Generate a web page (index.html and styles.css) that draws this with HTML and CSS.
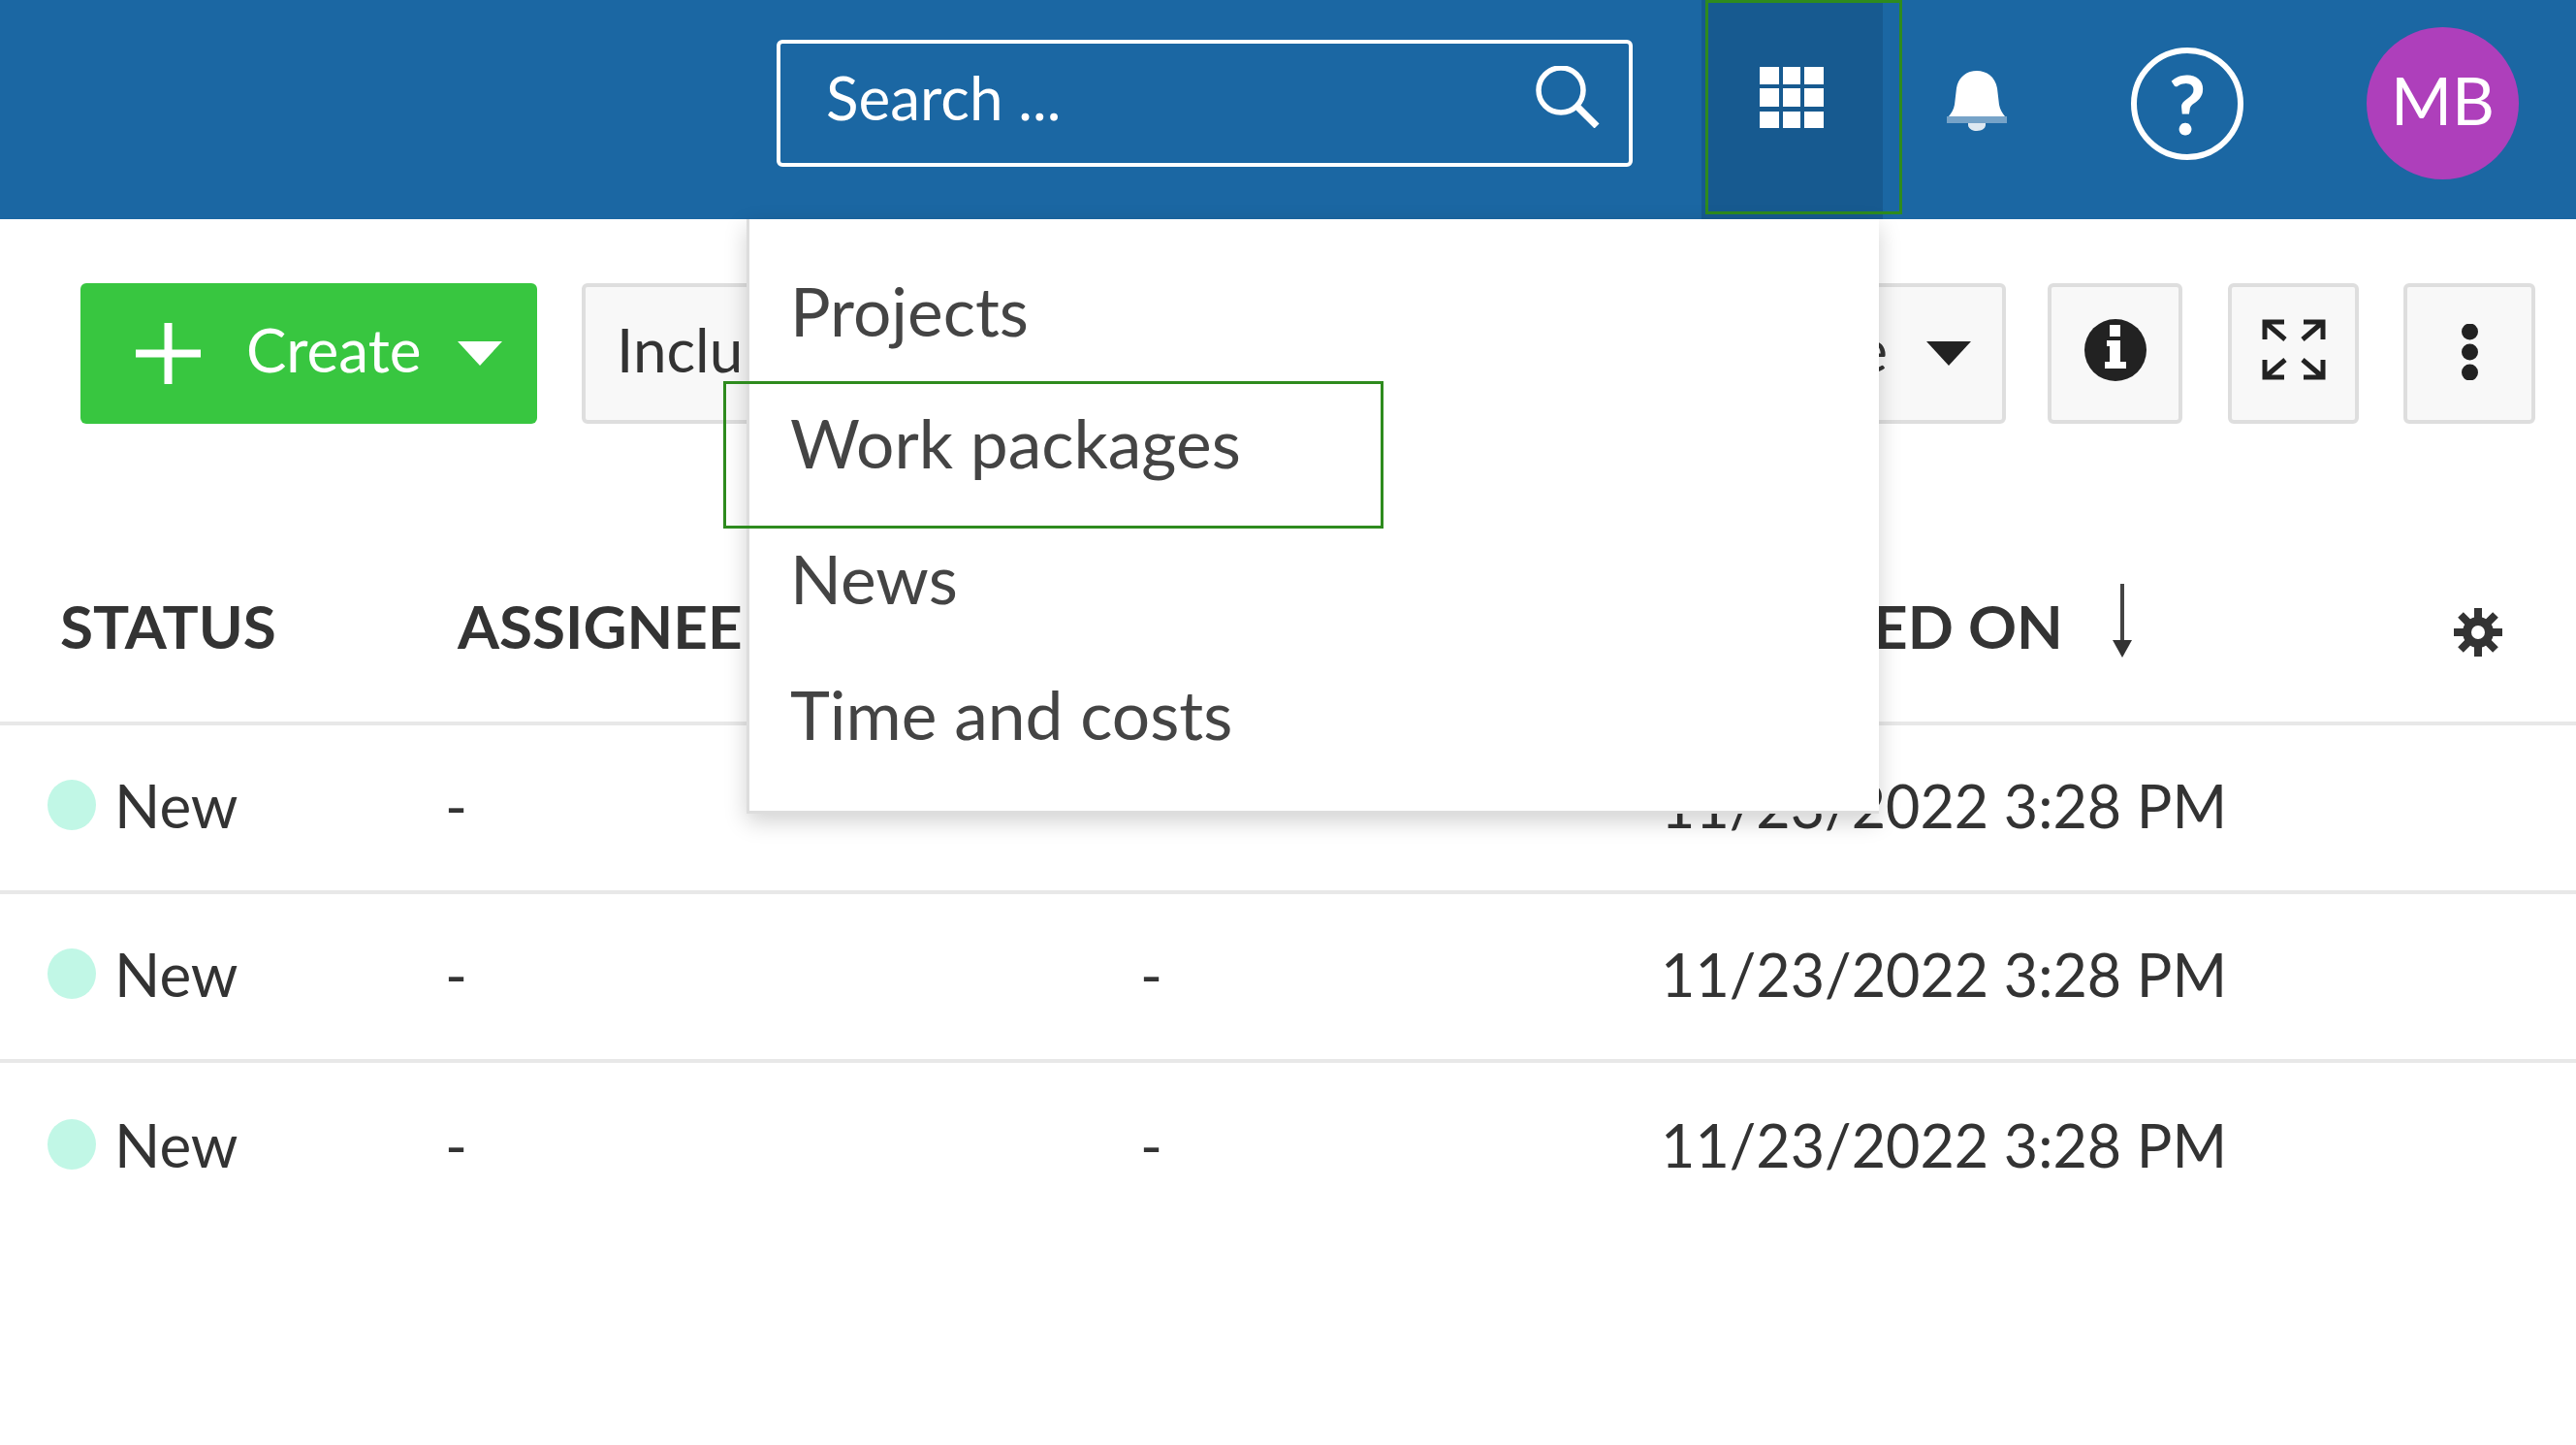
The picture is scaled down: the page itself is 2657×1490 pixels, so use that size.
FILE: index.html
```html
<!DOCTYPE html>
<html lang="en">

<head>
    <meta charset="UTF-8">
    <meta name="viewport" content="width=device-width, initial-scale=1.0">
    <title>Work packages</title>
    <link rel="stylesheet" href="styles.css">
</head>

<body>

    <header class="topbar">
        <div class="search">
            <span>Search ...</span>
            <svg class="search-icon" viewBox="0 0 67 64"><circle cx="27" cy="25" r="23" fill="none" stroke="#fff" stroke-width="5.500"/><path d="M44 42l20 20" stroke="#fff" stroke-width="7"/></svg>
        </div>
        <div class="modules">
            <svg class="grid-icon" viewBox="0 0 66 63" fill="#fff">
                <rect x="0" y="0" width="20" height="18"/><rect x="24" y="0" width="18" height="18"/><rect x="46" y="0" width="20" height="18"/>
                <rect x="0" y="22" width="20" height="19"/><rect x="24" y="22" width="18" height="19"/><rect x="46" y="22" width="20" height="19"/>
                <rect x="0" y="46" width="20" height="17"/><rect x="24" y="46" width="18" height="17"/><rect x="46" y="46" width="20" height="17"/>
            </svg>
            <div class="modules-mark"></div>

            <div class="menu">
                <a class="menu-item">Projects</a>
                <a class="menu-item">Work packages</a>
                <a class="menu-item">News</a>
                <a class="menu-item">Time and costs</a>
                <div class="menu-mark"></div>
            </div>
        </div>
        <svg class="bell-icon" viewBox="0 0 62 62" fill="#fff">
            <path d="M31 0c10 0 19 6 21 18l2 17c1 5 3 8 6 12H2c3-4 5-7 6-12l2-17C12 6 21 0 31 0z"/>
            <rect x="0" y="47" width="62" height="7" opacity="0.4"/>
            <path d="M22 54h18v2c0 3-4 6-9 6s-9-3-9-6z" opacity="0.85"/>
        </svg>
        <div class="help">?</div>
        <div class="avatar">MB</div>
    </header>

    <div class="toolbar">
        <button class="btn-create">
            <svg class="plus-icon" viewBox="0 0 67 63"><path d="M0 31.500h67M33.500 0v63" stroke="#fff" stroke-width="8"/></svg>
            <span class="btn-label">Create</span>
            <span class="caret caret-white"></span>
        </button>
        <button class="tool-btn btn-include"><span class="btn-label">Inclu</span></button>
        <button class="tool-btn btn-view"><span class="btn-label">Table</span><span class="caret"></span></button>
        <button class="tool-btn btn-icon info-btn">
            <svg class="info-icon" viewBox="0 0 64 64"><circle cx="32" cy="32" r="32" fill="#222"/><rect x="26" y="6" width="11" height="12" fill="#fff"/><path d="M23 22h14v22h6v7H21v-7h5V28h-3z" fill="#fff"/></svg>
        </button>
        <button class="tool-btn btn-icon expand-btn">
            <svg class="expand-icon" viewBox="0 0 66 63" fill="none" stroke="#222" stroke-width="5">
                <path d="M3 21V3h20M3 3l21 18M63 21V3H43M63 3L42 21M3 42v18h20M3 60l21-18M63 42v18H43M63 60L42 42"/>
            </svg>
        </button>
        <button class="tool-btn btn-icon more-btn">
            <svg class="more-icon" viewBox="0 0 21 58" fill="#222"><circle cx="10.500" cy="8" r="8.500"/><circle cx="10.500" cy="29" r="8.500"/><circle cx="10.500" cy="50" r="8.500"/></svg>
        </button>
    </div>

    <div class="wp-table">
        <div class="wp-row wp-head">
            <div class="col">STATUS</div>
            <div class="col">ASSIGNEE</div>
            <div class="col">PRIORITY</div>
            <div class="col sort-col">
                <span>UPDATED ON</span>
                <svg class="sort-icon" viewBox="0 0 22 76"><path d="M11 0v62" stroke="#444" stroke-width="4"/><path d="M1 58h20L11 76z" fill="#333"/></svg>
            </div>
            <svg class="gear-icon" viewBox="0 0 52 52">
                <path d="M26 1v50M1 26h50M8 8l36 36M44 8L8 44" stroke="#333" stroke-width="8"/>
                <circle cx="26" cy="26" r="16" fill="#333"/>
                <circle cx="26" cy="26" r="7" fill="#fff"/>
            </svg>
        </div>
        <div class="wp-row">
            <div class="col"><span class="dot"></span>New</div>
            <div class="col">-</div>
            <div class="col">-</div>
            <div class="col date">11/23/2022 3:28 PM</div>
        </div>
        <div class="wp-row">
            <div class="col"><span class="dot"></span>New</div>
            <div class="col">-</div>
            <div class="col">-</div>
            <div class="col date">11/23/2022 3:28 PM</div>
        </div>
        <div class="wp-row no-line">
            <div class="col"><span class="dot"></span>New</div>
            <div class="col">-</div>
            <div class="col">-</div>
            <div class="col date">11/23/2022 3:28 PM</div>
        </div>
    </div>

</body>
</html>
```

FILE: styles.css
```css
body {
    font-family: 'Lato', sans-serif;
    background-color: #ffffff;
    color: #333333;
    margin: 0;
    height: 1490px;
    overflow: hidden;
}

.topbar {
    position: relative;
    z-index: 5;
    display: flex;
    align-items: center;
    height: 226px;
    box-sizing: border-box;
    padding-left: 801px;
    background-color: #1b67a3;
}

.search {
    display: flex;
    align-items: center;
    justify-content: space-between;
    box-sizing: border-box;
    width: 883px;
    height: 131px;
    margin-bottom: 13px;
    padding: 0 30px 13px 47px;
    border: 4px solid #ffffff;
    border-radius: 6px;
    color: #ffffff;
    font-size: 62px;
}

.search-icon {
    width: 67px;
    height: 64px;
}

.modules {
    position: relative;
    display: flex;
    align-items: center;
    justify-content: center;
    box-sizing: border-box;
    width: 187px;
    height: 226px;
    margin-left: 71px;
    padding-bottom: 25px;
    background-color: #175a90;
}

.grid-icon {
    width: 66px;
    height: 63px;
    margin-right: 2px;
}

.modules-mark {
    position: absolute;
    top: 0;
    left: 4px;
    width: 203px;
    height: 221px;
    box-sizing: border-box;
    border: 3px solid #2e8b1e;
}

.menu {
    position: absolute;
    top: 226px;
    left: -985px;
    box-sizing: border-box;
    width: 1168px;
    height: 613px;
    padding-top: 24px;
    background-color: #ffffff;
    border-left: 3px solid #dddddd;
    border-bottom: 3px solid #dddddd;
    box-shadow: 0 8px 22px rgba(0, 0, 0, 0.18);
}

.menu-item {
    display: block;
    height: 140px;
    padding-left: 42px;
    color: #444444;
    font-size: 69.500px;
    line-height: 140px;
}

.menu-item:first-child {
    height: 136px;
}

.menu-mark {
    position: absolute;
    top: 167px;
    left: -27px;
    width: 681px;
    height: 152px;
    box-sizing: border-box;
    border: 3px solid #2e8b1e;
}

.bell-icon {
    width: 62px;
    height: 62px;
    margin: -18px 0 0 66px;
}

.help {
    display: flex;
    align-items: center;
    justify-content: center;
    box-sizing: border-box;
    width: 116px;
    height: 116px;
    margin: 0 0 13px 128px;
    border: 6px solid #ffffff;
    border-radius: 50%;
    color: #ffffff;
    font-size: 84px;
    font-weight: 700;
}

.avatar {
    display: flex;
    align-items: center;
    justify-content: center;
    box-sizing: border-box;
    width: 157px;
    height: 157px;
    margin: 0 0 13px 127px;
    padding-bottom: 8px;
    border-radius: 50%;
    background-color: #ae3fbb;
    color: #ffffff;
    font-size: 68px;
}

.toolbar {
    display: flex;
    align-items: center;
    height: 145px;
    margin-top: 66px;
    padding-left: 83px;
}

button {
    font-family: inherit;
    box-sizing: border-box;
    flex-shrink: 0;
    height: 145px;
    margin: 0;
    border-radius: 6px;
}

.btn-label {
    margin-bottom: 10px;
}

.btn-create {
    display: flex;
    align-items: center;
    width: 471px;
    padding: 0 0 0 57px;
    border: none;
    background-color: #38c640;
    color: #ffffff;
    font-size: 62px;
}

.plus-icon {
    width: 67px;
    height: 63px;
    margin-right: 47px;
}

.caret {
    width: 0;
    height: 0;
    border-left: 23px solid transparent;
    border-right: 23px solid transparent;
    border-top: 25px solid #222222;
}

.caret-white {
    margin-left: 38px;
    border-top-color: #ffffff;
}

.tool-btn {
    background-color: #f8f8f8;
    border: 4px solid #dedede;
    color: #333333;
    font-size: 62px;
}

.btn-include {
    display: flex;
    align-items: center;
    width: 500px;
    margin-left: 46px;
    padding: 0 0 0 32px;
    white-space: nowrap;
}

.btn-view {
    display: flex;
    align-items: center;
    justify-content: flex-end;
    gap: 40px;
    width: 369px;
    margin-left: 600px;
    padding-right: 32px;
}

.btn-icon {
    display: flex;
    align-items: center;
    justify-content: center;
}

.info-btn {
    width: 139px;
    margin-left: 43px;
}

.expand-btn {
    width: 135px;
    margin-left: 47px;
}

.more-btn {
    width: 136px;
    margin-left: 46px;
}

.info-icon {
    width: 64px;
    height: 64px;
    margin-bottom: 8px;
}

.expand-icon {
    width: 66px;
    height: 63px;
    margin-bottom: 8px;
}

.more-icon {
    width: 21px;
    height: 58px;
    margin-bottom: 3px;
}

.wp-row {
    position: relative;
    display: grid;
    grid-template-columns: 410px 717px 537px 1fr;
    align-items: center;
    box-sizing: border-box;
    height: 174px;
    padding-bottom: 6px;
    border-bottom: 4px solid #e8e8e8;
    font-size: 62px;
}

.wp-row .col {
    display: flex;
    align-items: center;
    padding-left: 49px;
}

.wp-row .date {
    font-size: 61px;
}

.wp-head {
    height: 311px;
    padding: 112px 0 4px 0;
    font-weight: 700;
}

.wp-head .col {
    padding-left: 62px;
    color: #333333;
}

.sort-col {
    gap: 50px;
}

.sort-icon {
    width: 22px;
    height: 76px;
    margin-top: -10px;
}

.gear-icon {
    position: absolute;
    right: 75px;
    top: 189px;
    width: 52px;
    height: 52px;
}

.dot {
    width: 50px;
    height: 52px;
    margin-right: 19px;
    border-radius: 50%;
    background-color: #c1f7e6;
}

.no-line {
    border-bottom: none;
}
```
